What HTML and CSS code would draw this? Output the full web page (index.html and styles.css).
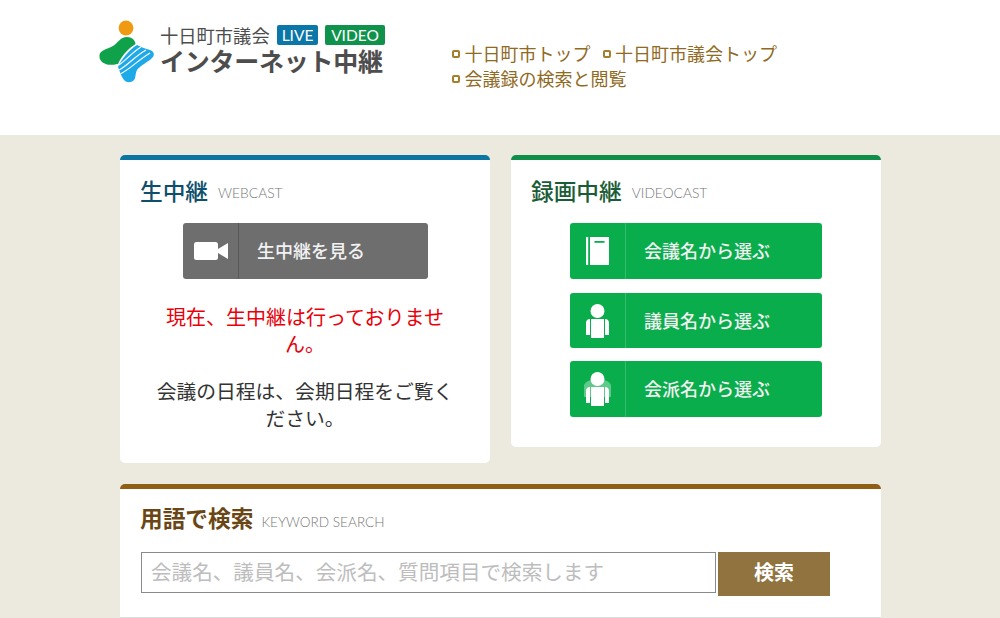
FILE: index.html
```html
<!DOCTYPE html>
<html lang="ja">
<head>
<meta charset="utf-8">
<title>十日町市議会 インターネット中継</title>
<link rel="stylesheet" href="styles.css">
</head>
<body>
<header class="site-header">
  <a class="logo" href="#">
    <svg class="logo-mark" viewBox="97 18 60 70" aria-hidden="true">
      <defs>
        <clipPath id="wave"><path d="M137 45C141 47 146 49 150 50C155 52 155 56 151 59C146 63 140 66 137 70C135 74 136 78 134 80C131 83 127 83 124 80C121 76 120 72 118 67C121 60 129 50 137 45Z"/></clipPath>
      </defs>
      <circle cx="126" cy="28" r="7.4" fill="#f09a14"/>
      <path fill="#0fa24b" d="M99.500 55C100 50 108 49 113 46C118 43 120 37 127 37C132 37 135 40 135.500 44C129 48 122 55 118 64C113 65 110 65 107 64.500C102 63 99 60 99.500 55Z"/>
      <path fill="#1ea9e8" d="M137 45C141 47 146 49 150 50C155 52 155 56 151 59C146 63 140 66 137 70C135 74 136 78 134 80C131 83 127 83 124 80C121 76 120 72 118 67C121 60 129 50 137 45Z"/>
      <g clip-path="url(#wave)" fill="none" stroke="#fff" stroke-width="1.2">
        <path d="M117 66C125 62 131 53 141 47"/>
        <path d="M119 70C127 66 134 57 146 50"/>
        <path d="M120 74C129 70 137 61 150 53"/>
      </g>
    </svg>
    <div class="logo-text">
      <div class="logo-top">
        <span class="logo-city">十日町市議会</span>
        <span class="tag tag-live">LIVE</span>
        <span class="tag tag-video">VIDEO</span>
      </div>
      <div class="logo-main">インターネット中継</div>
    </div>
  </a>
  <nav class="site-nav">
    <a class="nav-link" href="#">十日町市トップ</a>
    <a class="nav-link" href="#">十日町市議会トップ</a>
    <a class="nav-link" href="#">会議録の検索と閲覧</a>
  </nav>
</header>
<main class="content">
  <div class="card-row">
    <section class="card card-live">
      <h2 class="card-title"><span class="title-ja">生中継</span><span class="title-en">WEBCAST</span></h2>
      <a class="btn btn-gray" href="#">
        <span class="btn-icon">
          <svg width="34" height="18" viewBox="0 0 34 18" aria-hidden="true"><rect width="24" height="18" rx="2.5" fill="#fff"/><path d="M24 7L34 1V17L24 11Z" fill="#fff"/></svg>
        </span>
        <span class="btn-label">生中継を見る</span>
      </a>
      <div class="notice">
        <p class="notice-alert">現在、生中継は行っておりません。</p>
        <p class="notice-info">会議の日程は、会期日程をご覧ください。</p>
      </div>
    </section>
    <section class="card card-video">
      <h2 class="card-title"><span class="title-ja">録画中継</span><span class="title-en">VIDEOCAST</span></h2>
      <div class="btn-stack">
        <a class="btn btn-green" href="#">
          <span class="btn-icon">
            <svg width="23" height="28" viewBox="0 0 23 28" aria-hidden="true"><rect width="2.2" height="28" fill="#fff"/><path d="M4 0H23V28H4Z" fill="#fff"/><rect x="8.5" y="4" width="10" height="1.8" fill="#0aad4c"/></svg>
          </span>
          <span class="btn-label">会議名から選ぶ</span>
        </a>
        <a class="btn btn-green" href="#">
          <span class="btn-icon">
            <svg width="23" height="34" viewBox="0 0 23 34" aria-hidden="true"><circle cx="11.5" cy="7" r="7" fill="#fff"/><path d="M5 15H18V34H5Z" fill="#fff"/><path d="M0 19C0 16.500 1.500 15 4 15V31H0ZM23 19C23 16.500 21.500 15 19 15V31H23Z" fill="#fff"/></svg>
          </span>
          <span class="btn-label">議員名から選ぶ</span>
        </a>
        <a class="btn btn-green" href="#">
          <span class="btn-icon">
            <svg width="27" height="34" viewBox="0 0 27 34" aria-hidden="true"><path d="M0 13C2 9 6 8 9 8H18C21 8 25 9 27 13V25H0Z" fill="#fff" opacity=".35"/><circle cx="13.500" cy="7" r="7" fill="#fff"/><path d="M7 15H20V34H7Z" fill="#fff"/><path d="M2 19C2 16.500 3.500 15 6 15V31H2ZM25 19C25 16.500 23.500 15 21 15V31H25Z" fill="#fff"/></svg>
          </span>
          <span class="btn-label">会派名から選ぶ</span>
        </a>
      </div>
    </section>
  </div>
  <section class="card card-search">
    <h2 class="card-title"><span class="title-ja">用語で検索</span><span class="title-en">KEYWORD SEARCH</span></h2>
    <form class="search-form">
      <input class="search-input" type="text" placeholder="会議名、議員名、会派名、質問項目で検索します">
      <button class="search-btn" type="button">検索</button>
    </form>
  </section>
</main>
</body>
</html>
```
FILE: styles.css
```css
*, *::before, *::after { box-sizing: border-box; }
html, body { margin: 0; padding: 0; height: 100%; overflow: hidden; }
body {
  background: #eceade;
  font-family: "Noto Sans CJK JP", "Noto Sans", sans-serif;
  color: #333;
}
a { text-decoration: none; color: inherit; }
p, h2 { margin: 0; }

.site-header {
  height: 135px;
  background: #fff;
  display: flex;
  padding-left: 97px;
}
.logo { display: flex; height: 135px; }
.logo-mark { width: 60px; height: 70px; margin-top: 18px; flex: none; }
.logo-text { margin-left: 3px; padding-top: 24px; width: 231px; }
.logo-top { display: flex; align-items: center; height: 22px; }
.logo-city { font-size: 18.300px; line-height: 22px; color: #4d4d4d; width: 117px; white-space: nowrap; }
.tag {
  font-family: "Lato", sans-serif;
  font-size: 15.500px;
  height: 20px;
  line-height: 20px;
  color: #fff;
  text-align: center;
  border-radius: 2px;
}
.tag-live { background: #0b76a8; width: 41px; }
.tag-video { background: #0f934c; width: 60px; margin-left: 7px; }
.logo-main {
  font-size: 25px;
  line-height: 28px;
  font-weight: 700;
  color: #4d4d4d;
  white-space: nowrap;
  letter-spacing: -0.250px;
}
.site-nav {
  margin-left: 61px;
  padding-top: 41px;
  width: 345px;
  display: flex;
  flex-wrap: wrap;
  column-gap: 12px;
  align-content: flex-start;
}
.nav-link {
  font-size: 18px;
  line-height: 25px;
  color: #8f6a1f;
  display: flex;
  align-items: center;
  gap: 4.500px;
}
.nav-link::before {
  content: "";
  width: 8px;
  height: 8px;
  border: 2px solid #a67c2d;
  border-radius: 2px;
  flex: none;
}
.nav-link:last-child { flex-basis: 100%; }

.content { width: 761px; margin-left: 120px; padding-top: 20px; }
.card-row { display: flex; align-items: flex-start; gap: 21px; }
.card {
  background: #fff;
  width: 370px;
  border-top: 5px solid;
  border-radius: 5px;
}
.card-live { border-color: #0b76a1; padding-bottom: 32px; }
.card-video { border-color: #0f8f4a; padding-bottom: 30px; }
.card-title {
  height: 63px;
  padding: 14px 0 0 20px;
  display: flex;
  align-items: flex-start;
  font-weight: 500;
}
.title-ja { font-size: 22.700px; line-height: 34px; }
.title-en {
  font-family: "Lato", sans-serif;
  font-weight: 300;
  font-size: 13.800px;
  line-height: 34px;
  color: #777;
  margin: 2px 0 0 10px;
}
.card-live .title-ja { color: #0e4f6b; }
.card-video .title-ja { color: #1a5c36; }
.card-search .title-ja { color: #6a4616; font-weight: 700; }

.btn {
  display: flex;
  align-items: stretch;
  border-radius: 3px;
  color: #f2f2f2;
  font-size: 18px;
  font-weight: 500;
}
.btn-icon {
  flex: none;
  width: 56px;
  display: flex;
  align-items: center;
  justify-content: center;
  border-right: 1px solid rgba(255, 255, 255, 0.18);
}
.btn-label { display: flex; align-items: center; padding: 0 0 2px 18px; }
.btn-gray { background: #6e6e6e; width: 245px; height: 56px; margin-left: 63px; }
.btn-gray .btn-icon { border-right-color: rgba(0, 0, 0, 0.2); }
.btn-stack { display: flex; flex-direction: column; gap: 13px; margin-left: 59px; width: 252px; }
.btn-green { background: #0aad4c; height: 56px; }
.btn-green:nth-child(2) { height: 55px; margin-top: 1px; }

.notice { width: 310px; margin: 24px auto 0; text-align: center; font-size: 19.800px; line-height: 27px; }
.notice-alert { color: #e8000a; margin-bottom: 20px; font-size: 20px; }
.notice-info { color: #333; }

.card-search {
  width: 761px;
  height: 134px;
  margin-top: 21px;
  border-color: #8f5f14;
  border-bottom: 1px solid #ddd;
  border-radius: 5px 5px 0 0;
}
.card-search .card-title { height: 63px; padding-top: 12px; }
.card-search .title-en { margin: 4px 0 0 8px; font-size: 13.600px; }
.search-form { display: flex; align-items: flex-start; padding-left: 21px; }
.search-input {
  width: 575px;
  height: 41px;
  border: 1px solid #8a8a8a;
  border-top-width: 1.500px;
  padding: 0 9px 4px;
  font: 20.600px "Noto Sans CJK JP", sans-serif;
  background: #fff;
  outline: none;
}
.search-input::placeholder { color: #bdbdbd; opacity: 1; }
.search-btn {
  width: 112px;
  height: 44px;
  margin-left: 2px;
  border: 0;
  padding: 0 0 5px;
  background: #917340;
  color: #fff;
  font: 700 20px "Noto Sans CJK JP", sans-serif;
}
```
